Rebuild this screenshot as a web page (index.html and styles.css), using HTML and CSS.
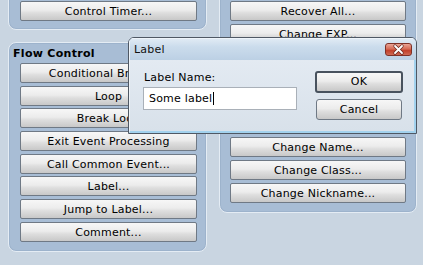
FILE: index.html
```html
<!DOCTYPE html>
<html>
<head>
<meta charset="utf-8">
<link rel="stylesheet" href="styles.css">
</head>
<body>
<div class="screen">
  <div class="cols">
    <div class="col col-left">
      <div class="panel panel-top">
        <div class="stack">
          <button class="btn">Control Timer...</button>
        </div>
      </div>
      <div class="panel panel-flow">
        <div class="ptitle">Flow Control</div>
        <div class="stack">
          <button class="btn">Conditional Branch...</button>
          <button class="btn">Loop</button>
          <button class="btn">Break Loop</button>
          <button class="btn">Exit Event Processing</button>
          <button class="btn">Call Common Event...</button>
          <button class="btn">Label...</button>
          <button class="btn">Jump to Label...</button>
          <button class="btn">Comment...</button>
        </div>
      </div>
    </div>
    <div class="col col-right">
      <div class="panel panel-right">
        <div class="stack">
          <button class="btn">Recover All...</button>
          <button class="btn">Change EXP...</button>
          <button class="btn">Change Level...</button>
          <button class="btn">Change Parameters...</button>
          <button class="btn">Change Skill...</button>
          <button class="btn">Change Equipment...</button>
          <button class="btn">Change Name...</button>
          <button class="btn">Change Class...</button>
          <button class="btn">Change Nickname...</button>
        </div>
      </div>
    </div>
  </div>

  <div class="dialog">
    <div class="titlebar">
      <span class="dtitle">Label</span>
      <span class="close">
        <svg width="27" height="13" viewBox="0 0 27 13">
          <path d="M10 3 L17 10 M17 3 L10 10" stroke="#6b2a22" stroke-width="3.2" stroke-linecap="round"/>
          <path d="M10 3 L17 10 M17 3 L10 10" stroke="#ffffff" stroke-width="1.8" stroke-linecap="round"/>
        </svg>
      </span>
    </div>
    <div class="dbody">
      <div class="field">
        <div class="flabel">Label Name:</div>
        <div class="input">Some label<span class="caret"></span></div>
      </div>
      <div class="actions">
        <button class="btn dbtn ok">OK</button>
        <button class="btn dbtn cancel">Cancel</button>
      </div>
    </div>
  </div>
</div>
</body>
</html>
```

FILE: styles.css
```css
html, body {
  margin: 0;
  padding: 0;
}
body {
  width: 423px;
  height: 265px;
  overflow: hidden;
  background: #c9d5e1;
  font-family: "DejaVu Sans", sans-serif;
  font-size: 11px;
  color: #000;
}
.screen {
  position: relative;
  width: 423px;
  height: 265px;
  overflow: hidden;
}
.cols {
  display: flex;
  align-items: flex-start;
  gap: 12px;
  padding-left: 8px;
  margin-top: -30px;
}
.col {
  display: flex;
  flex-direction: column;
}
.col-left { width: 199px; gap: 12px; }
.col-right { width: 198px; }

.panel {
  box-sizing: border-box;
  background: #a8bdd5;
  border: 1px solid #e4ecf4;
  border-radius: 8px;
  box-shadow: inset 0 0 0 1px #9db3cc;
}
.panel-top {
  padding: 30px 9px 8px 11px;
}
.panel-flow {
  padding: 3px 9px 9px 11px;
}
.panel-right {
  padding: 30px 10px 9.5px 10px;
}
.ptitle {
  margin-left: -7px;
  line-height: 15px;
  height: 15px;
  margin-bottom: 2px;
  font-weight: bold;
  letter-spacing: 0.3px;
}
.stack {
  display: flex;
  flex-direction: column;
  gap: 2.7px;
}
.btn {
  box-sizing: border-box;
  height: 20px;
  margin: 0;
  padding: 0;
  width: 100%;
  border: 1px solid #6f7985;
  border-radius: 2px;
  background: linear-gradient(to bottom, #f7f7f7 0%, #ececec 45%, #dedede 60%, #c8c8c8 100%);
  font-family: "DejaVu Sans", sans-serif;
  font-size: 11px;
  letter-spacing: 0.2px;
  color: #000;
  line-height: 19px;
  text-align: center;
  white-space: nowrap;
  overflow: hidden;
}

.dialog {
  position: absolute;
  left: 128px;
  top: 37px;
  width: 289px;
  height: 97px;
  box-sizing: border-box;
  border: 1px solid #4f5864;
  border-radius: 6px 6px 0 0;
  background: #c0d3e6;
  display: flex;
  flex-direction: column;
  overflow: hidden;
}
.titlebar {
  height: 22px;
  flex: none;
  display: flex;
  align-items: center;
  justify-content: space-between;
  padding: 0 4px 0 5px;
  background: linear-gradient(to bottom, #e2ecf5 0%, #cbdcec 40%, #bcd0e4 100%);
  box-shadow: inset 1px 1px 0 #eef4fa;
}
.dtitle {
  font-size: 11px;
  letter-spacing: 0.2px;
  color: #111;
  padding-top: 1px;
}
.close {
  display: block;
  width: 27px;
  height: 13px;
  box-sizing: border-box;
  border: 1px solid #7e3127;
  border-radius: 3px;
  background: linear-gradient(to bottom, #e9a596 0%, #d66a55 45%, #c2412b 60%, #cf6a54 100%);
  position: relative;
}
.close svg {
  position: absolute;
  left: -1px;
  top: -1px;
}
.dbody {
  flex: 1;
  display: flex;
  padding: 11px 11px 0 14px;
  background: linear-gradient(to bottom, #e3eaf2 0%, #d8e1ea 100%);
  border-left: 1px solid #eef3f8;
  border-right: 2px solid #a3d2ee;
  border-bottom: 2px solid #a3d2ee;
  letter-spacing: 0.2px;
}
.field {
  display: flex;
  flex-direction: column;
}
.flabel {
  line-height: 14px;
  height: 14px;
  margin-bottom: 2px;
}
.input {
  box-sizing: border-box;
  margin-left: -1px;
  width: 154px;
  height: 23px;
  background: #fff;
  border: 1px solid #a9b0b8;
  padding: 0 0 0 5px;
  line-height: 21px;
  display: flex;
  align-items: center;
}
.caret {
  display: inline-block;
  width: 1px;
  height: 13px;
  background: #000;
  margin-left: 1px;
}
.actions {
  margin-left: auto;
  display: flex;
  flex-direction: column;
  align-items: center;
  width: 88px;
  gap: 6px;
}
.dbtn {
  border-radius: 3px;
}
.ok {
  width: 88px;
  height: 22px;
  border: 2px solid #48525e;
  line-height: 18px;
}
.cancel {
  width: 86px;
  height: 21px;
  line-height: 19px;
}
```
